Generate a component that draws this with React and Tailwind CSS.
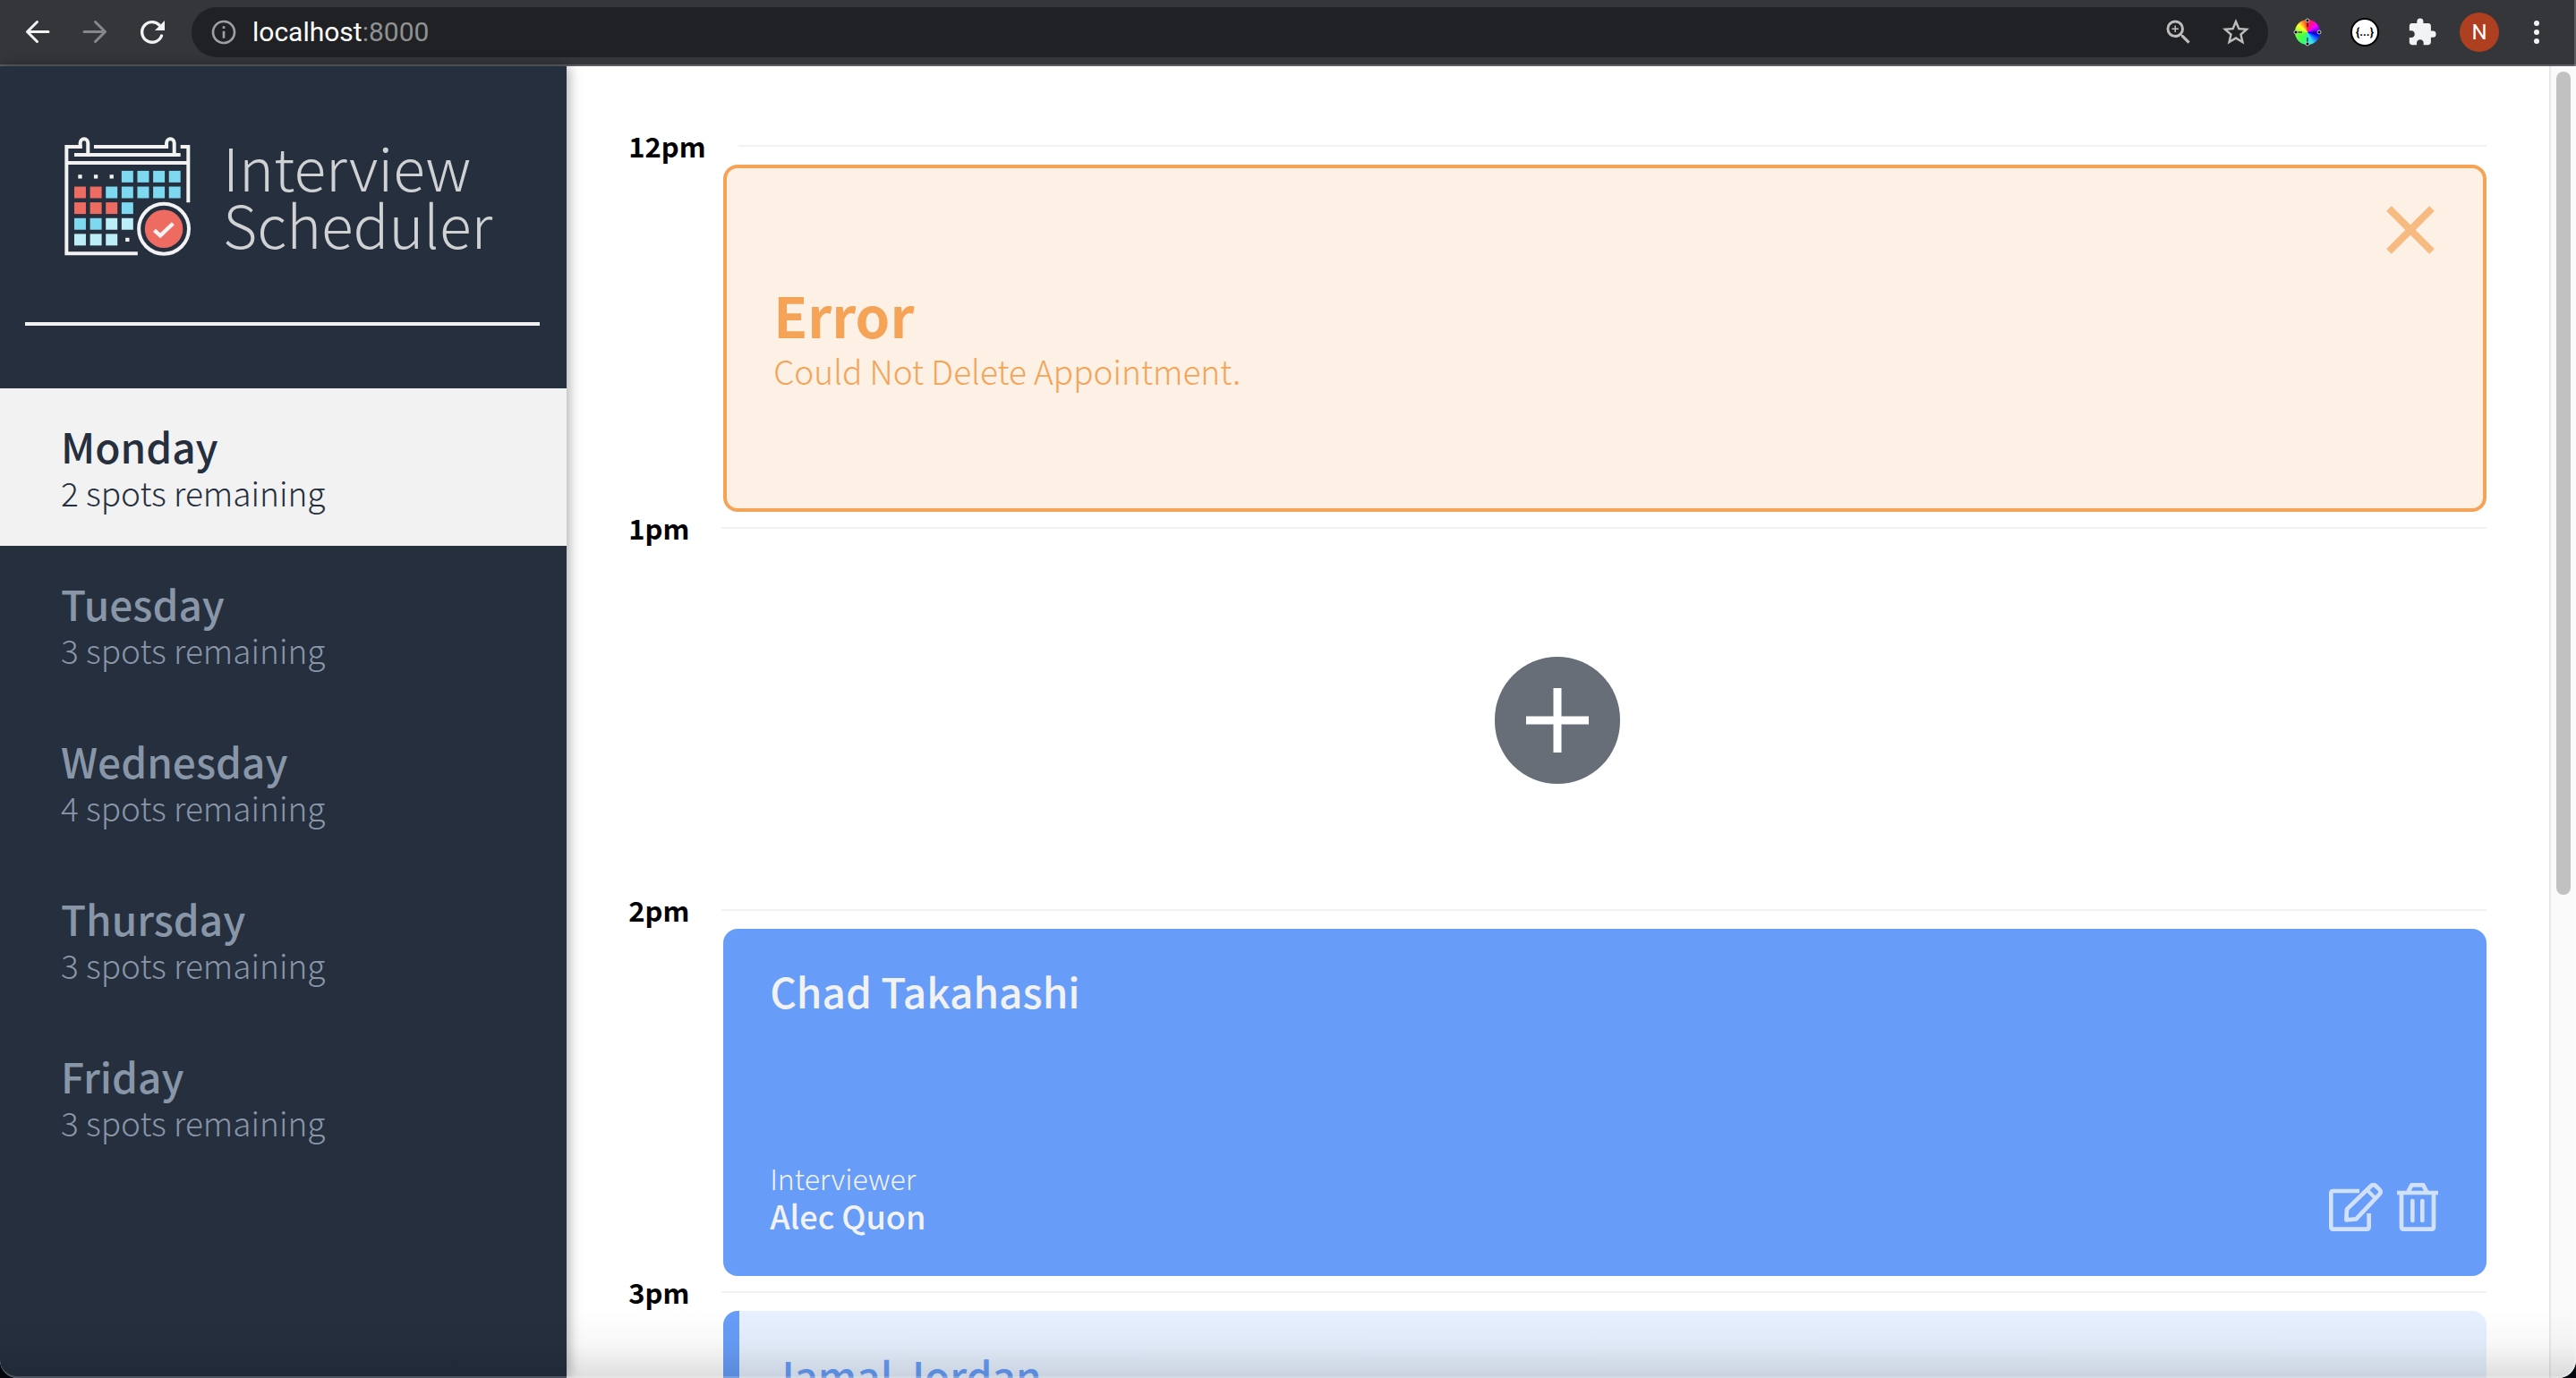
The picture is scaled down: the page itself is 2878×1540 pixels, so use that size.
import { MdExtension, MdInfoOutline, MdStarOutline, MdZoomIn } from "react-icons/md";

const DAYS = [
  { name: "Monday", spots: 2 },
  { name: "Tuesday", spots: 3 },
  { name: "Wednesday", spots: 4 },
  { name: "Thursday", spots: 3 },
  { name: "Friday", spots: 3 },
];

const BLUE = "#7dd8f0";
const PALE = "#bbeef8";
const RED = "#ee6b62";

const CALENDAR_ROWS = [
  [null, null, null, BLUE, BLUE, BLUE, BLUE],
  [RED, RED, BLUE, BLUE, BLUE, BLUE, BLUE],
  [RED, RED, RED, BLUE],
  [BLUE, BLUE, PALE, PALE],
  [PALE, PALE, PALE, null],
];

function BackIcon() {
  return (
    <svg viewBox="0 0 32 32" className="h-8 w-8" fill="none" stroke="currentColor" strokeWidth="3" strokeLinecap="round" strokeLinejoin="round" aria-hidden="true">
      <path d="M28 15.500H4.500M15.500 4.500L4.500 15.500L15.500 26.500" />
    </svg>
  );
}

function ForwardIcon() {
  return (
    <svg viewBox="0 0 32 32" className="h-8 w-8" fill="none" stroke="currentColor" strokeWidth="3" strokeLinecap="round" strokeLinejoin="round" aria-hidden="true">
      <path d="M4 15.500H27.500M16.500 4.500L27.500 15.500L16.500 26.500" />
    </svg>
  );
}

function ReloadIcon() {
  return (
    <svg viewBox="0 0 32 32" className="h-8 w-8" fill="none" stroke="currentColor" strokeWidth="3.400" strokeLinecap="round" aria-hidden="true">
      <path d="M26.500 20A11.300 11.300 0 1 1 24 8" />
      <path d="M30 3V14H19Z" fill="currentColor" stroke="none" />
    </svg>
  );
}

function ColorWheelIcon() {
  return (
    <span className="relative block h-7 w-7 rounded-full bg-[conic-gradient(#f22,#f0f,#00f,#3df,#3f6,#6f3,#ff3,#f22)]">
      <svg viewBox="0 0 32 32" className="absolute -top-0.5 -left-0.5 h-8 w-8" aria-hidden="true">
        <path d="M16 4V10M16 22V28M4 16H10M22 16H28" stroke="#000" strokeOpacity="0.5" strokeWidth="2" />
        {[[16, 3], [16, 29], [3, 16], [29, 16]].map(([cx, cy]) => (
          <circle key={`${cx}-${cy}`} cx={cx} cy={cy} r="2" fill="#000" stroke="#ddd" strokeWidth="0.900" />
        ))}
      </svg>
    </span>
  );
}

function CalendarLogo() {
  return (
    <svg viewBox="36 38 424 400" className="h-[133px] w-[141px] shrink-0" fill="none" stroke="#f2f2f2" strokeWidth="12" aria-hidden="true">
      <path d="M95 71H43V430H282" />
      <path d="M89 77V58A13 13 0 0 1 115 58V98" />
      <path d="M135 71H385" />
      <path d="M379 77V58A13 13 0 0 1 405 58V98" />
      <path d="M426 71H452V258" />
      <path d="M69 98H426" />
      <path d="M43 125H452" />
      {CALENDAR_ROWS.map((row, r) =>
        row.map((fill, c) =>
          fill ? (
            <rect key={`${r}-${c}`} x={69 + c * 53} y={152 + r * 53} width="39" height="39" fill={fill} stroke="none" />
          ) : (
            <rect key={`${r}-${c}`} x={82 + c * 53} y={165 + r * 53} width="13" height="13" fill="#f2f2f2" stroke="none" />
          )
        )
      )}
      <circle cx="370" cy="347" r="84" />
      <circle cx="370" cy="347" r="64" fill={RED} stroke="none" />
      <path d="M338 352L358 370L401 329" strokeWidth="13" />
    </svg>
  );
}

function EditIcon() {
  return (
    <svg viewBox="36 36 180 162" className="h-[54px] w-[60px]" fill="none" stroke="currentColor" strokeWidth="14" strokeLinejoin="round" aria-hidden="true">
      <path d="M138 63H50Q43 63 43 70V184Q43 191 50 191H163Q170 191 170 184V138" />
      <path d="M96 124L178 45Q185 39 192 45L206 59Q212 66 206 73L127 157L94 160Z" />
      <path d="M164 60L190 86" strokeWidth="12" />
    </svg>
  );
}

function TrashIcon() {
  return (
    <svg viewBox="264 36 138 162" className="h-[54px] w-[46px]" fill="none" stroke="currentColor" strokeWidth="14" strokeLinejoin="round" aria-hidden="true">
      <path d="M264 69H402" />
      <path d="M301 67L313 43H352L364 67" />
      <path d="M279 70V184Q279 191 286 191H380Q387 191 387 184V70" />
      <path d="M316 96V162M349 96V162" strokeLinecap="round" />
    </svg>
  );
}

function BrowserBar() {
  return (
    <header className="flex h-[74px] shrink-0 items-center border-b-2 border-[#5c5d60] bg-[#35363a] pr-[22px] pl-[26px] font-['Roboto',sans-serif]">
      <div className="flex gap-8 text-[#f1f3f4]">
        <button type="button" aria-label="Back"><BackIcon /></button>
        <button type="button" aria-label="Forward" className="text-[#86878a]"><ForwardIcon /></button>
        <button type="button" aria-label="Reload"><ReloadIcon /></button>
      </div>
      <div className="ml-7 flex h-14 flex-1 items-center rounded-full bg-[#202124] pr-[18px] pl-5">
        <MdInfoOutline className="h-8 w-8 text-[#9aa0a6]" />
        <p className="flex-1 pl-4 text-[30px] leading-8 text-[#909193]">
          <span className="text-white">localhost</span>:8000
        </p>
        <div className="flex gap-7 text-[#bdbdbf]">
          <button type="button" aria-label="Zoom"><MdZoomIn className="h-9 w-9" /></button>
          <button type="button" aria-label="Bookmark this page"><MdStarOutline className="h-9 w-9" /></button>
        </div>
      </div>
      <div className="ml-[22px] flex items-center gap-5">
        <button type="button" aria-label="Color picker" className="grid h-11 w-11 place-items-center"><ColorWheelIcon /></button>
        <button type="button" aria-label="JSON viewer" className="grid h-11 w-11 place-items-center">
          <span className="grid h-8 w-8 place-items-center rounded-full border-2 border-black bg-white text-[13px] leading-4 font-bold text-black">{"{...}"}</span>
        </button>
        <button type="button" aria-label="Extensions" className="grid h-11 w-11 place-items-center text-[#f1f3f4]"><MdExtension className="h-[34px] w-[34px]" /></button>
        <button type="button" aria-label="Profile" className="grid h-11 w-11 place-items-center rounded-full bg-[#ae3f20] text-[24px] leading-8 text-white">N</button>
        <button type="button" aria-label="Menu" className="flex h-11 w-11 flex-col items-center justify-center gap-1 text-[#f1f3f4]">
          <span className="h-1.5 w-1.5 rounded-full bg-current" />
          <span className="h-1.5 w-1.5 rounded-full bg-current" />
          <span className="h-1.5 w-1.5 rounded-full bg-current" />
        </button>
      </div>
    </header>
  );
}

function Sidebar() {
  return (
    <aside className="relative z-10 w-[22%] shrink-0 bg-[#252f3e] shadow-[2px_0_14px_rgba(0,0,0,0.35)]">
      <div className="flex gap-9 pt-[79px] pl-[72px]">
        <CalendarLogo />
        <h1 className="text-[66px] leading-[64px] font-light text-[#d0d1d3]">
          Interview
          <br />
          Scheduler
        </h1>
      </div>
      <hr className="mt-[74px] mr-[30px] mb-[70px] ml-7 border-t-4 border-[#f2f2f2]" />
      <nav>
        <ul>
          {DAYS.map((day, i) => (
            <li key={day.name}>
              <button
                type="button"
                className={
                  i === 0
                    ? "block w-full bg-[#f2f2f2] px-[68px] py-9 text-left text-[#252f3e]"
                    : "block w-full px-[68px] py-9 text-left text-[#8896a8]"
                }
              >
                <span className="block text-[46px] leading-[56px] font-medium">{day.name}</span>
                <span className="block text-[37px] leading-[48px] font-light">{day.spots} spots remaining</span>
              </button>
            </li>
          ))}
        </ul>
      </nav>
    </aside>
  );
}

function Slot({ time, children }) {
  return (
    <article>
      <header className="mb-[3px] flex h-9 items-center gap-9">
        <h2 className="text-[31px] leading-9 font-bold text-black">{time}</h2>
        <hr className="flex-1 border-t-2 border-[#f2f2f2]" />
      </header>
      {children}
    </article>
  );
}

function Booking({ name, interviewer }) {
  return (
    <div className="flex h-full flex-1 flex-col justify-between">
      <h3 className="text-[46px] leading-[56px] font-medium">{name}</h3>
      <div className="flex items-end justify-between">
        <div>
          <p className="text-[32px] leading-10 font-light">Interviewer</p>
          <p className="text-[36px] leading-[44px] font-medium">{interviewer}</p>
        </div>
        <div className="mb-1 flex gap-4 text-[#d1e1fc]">
          <button type="button" aria-label="Edit"><EditIcon /></button>
          <button type="button" aria-label="Delete"><TrashIcon /></button>
        </div>
      </div>
    </div>
  );
}

export default function App() {
  return (
    <div className="h-screen bg-[#04060d] font-['Noto_Sans_CJK_SC',sans-serif]">
      <div className="relative flex h-full flex-col overflow-hidden rounded-b-[20px] bg-white">
        <BrowserBar />
        <div className="flex min-h-0 flex-1">
          <Sidebar />
          <main className="flex-1 overflow-hidden pt-[71px] pr-[70px] pl-[69px]">
            <Slot time="12pm">
              <div className="ml-[106px] flex h-[388px] items-center justify-between rounded-2xl border-4 border-[#f4a357] bg-[#fdf0e4] pr-[54px] pl-[52px] text-[#f4a357]">
                <div>
                  <h3 className="text-[62px] leading-[72px] font-bold">Error</h3>
                  <p className="text-[37px] leading-[54px] font-light">Could Not Delete Appointment.</p>
                </div>
                <button type="button" aria-label="Close" className="mt-[42px] self-start text-[#f7ba80]">
                  <svg viewBox="0 0 54 54" className="h-[54px] w-[54px]" fill="none" stroke="currentColor" strokeWidth="8" aria-hidden="true">
                    <path d="M3 3L51 51M51 3L3 51" />
                  </svg>
                </button>
              </div>
            </Slot>
            <Slot time="1pm">
              <div className="flex h-[388px] items-center justify-center">
                <button type="button" aria-label="Add" className="rounded-full bg-[#686e78] text-white">
                  <svg viewBox="0 0 140 142" className="h-[142px] w-[140px]" fill="none" stroke="currentColor" strokeWidth="9" aria-hidden="true">
                    <path d="M35 71H105M70 35V107" />
                  </svg>
                </button>
              </div>
            </Slot>
            <Slot time="2pm">
              <div className="ml-[106px] h-[388px] rounded-2xl bg-[#679df8] pt-[41px] pr-[54px] pb-[46px] pl-[52px] text-[#f2f2f2]">
                <Booking name="Chad Takahashi" interviewer="Alec Quon" />
              </div>
            </Slot>
            <Slot time="3pm">
              <div className="ml-[106px] flex h-[388px] overflow-hidden rounded-2xl bg-[#e6f0fe] text-[#679df8]">
                <span className="w-[18px] bg-[#679df8]" />
                <h3 className="px-9 pt-[43px] text-[46px] leading-[56px] font-medium">Jamal Jordan</h3>
              </div>
            </Slot>
          </main>
          <div className="w-[30px] border-l-2 border-[#e8e8e8] bg-[#fafafa] px-1.5 pt-1.5" aria-hidden="true">
            <div className="h-[63%] w-4 rounded-full bg-[#c1c1c1]" />
          </div>
        </div>
        <div className="pointer-events-none absolute inset-x-0 bottom-0 z-20 h-[76px] bg-linear-to-b from-black/0 via-black/3 to-black/13" />
        <div className="pointer-events-none absolute inset-0 z-20 rounded-b-[20px] border-r-2 border-b-2 border-white/20" />
      </div>
    </div>
  );
}
